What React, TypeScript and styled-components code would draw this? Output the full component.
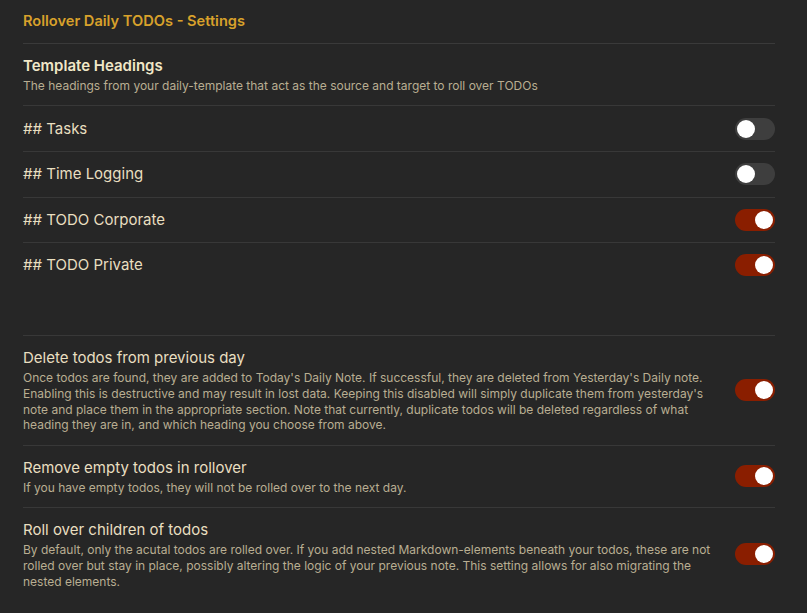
import React from 'react';
import styled, { createGlobalStyle } from 'styled-components';

const GlobalStyle = createGlobalStyle`
  html, body {
    margin: 0;
    padding: 0;
    background: #262626;
  }
  body {
    font-family: Inter, "Noto Sans", sans-serif;
    -webkit-font-smoothing: antialiased;
  }
`;

const Page = styled.div`
  min-height: 613px;
  background: #262626;
  padding: 0 32px 0 23px;
  box-sizing: border-box;
`;

const Title = styled.h3`
  margin: 0;
  padding: 12px 0 12px;
  font-size: 14.6px;
  font-weight: 600;
  line-height: 19px;
  color: #d8a12b;
  border-bottom: 1px solid #3a3a3a;
`;

const Item = styled.div<{ $spaceAfter?: number }>`
  display: flex;
  align-items: center;
  gap: 20px;
  padding: 11.3px 0;
  border-top: 1px solid #383838;
  margin-bottom: ${(p) => p.$spaceAfter ?? 0}px;

  &:first-of-type {
    border-top: none;
  }
`;

const Info = styled.div`
  flex: 1;
  min-width: 0;
`;

const Name = styled.div<{ $heading?: boolean }>`
  font-size: 15px;
  line-height: 22px;
  font-weight: ${(p) => (p.$heading ? 600 : 400)};
  color: ${(p) => (p.$heading ? '#f1e8c8' : '#e9dfc0')};
`;

const Desc = styled.div`
  font-size: 12px;
  line-height: 15.8px;
  color: #b9ae92;
  margin-top: 1px;
`;

const Track = styled.button<{ $on: boolean }>`
  position: relative;
  flex: none;
  width: 40px;
  height: 22px;
  border: none;
  padding: 0;
  border-radius: 11px;
  background: ${(p) => (p.$on ? '#8a1e00' : '#3e3e3e')};
  cursor: pointer;

  &::after {
    content: '';
    position: absolute;
    top: 2px;
    left: ${(p) => (p.$on ? '20px' : '2px')};
    width: 18px;
    height: 18px;
    border-radius: 50%;
    background: #ffffff;
  }
`;

const Toggle = ({ initial }: { initial: boolean }) => {
  const [on, setOn] = React.useState(initial);
  return <Track $on={on} onClick={() => setOn(!on)} aria-pressed={on} />;
};

const headings = [
  { name: '## Tasks', on: false },
  { name: '## Time Logging', on: false },
  { name: '## TODO Corporate', on: true },
  { name: '## TODO Private', on: true },
];

const options = [
  {
    name: 'Delete todos from previous day',
    desc: "Once todos are found, they are added to Today's Daily Note. If successful, they are deleted from Yesterday's Daily note. Enabling this is destructive and may result in lost data. Keeping this disabled will simply duplicate them from yesterday's note and place them in the appropriate section. Note that currently, duplicate todos will be deleted regardless of what heading they are in, and which heading you choose from above.",
  },
  {
    name: 'Remove empty todos in rollover',
    desc: 'If you have empty todos, they will not be rolled over to the next day.',
  },
  {
    name: 'Roll over children of todos',
    desc: 'By default, only the acutal todos are rolled over. If you add nested Markdown-elements beneath your todos, these are not rolled over but stay in place, possibly altering the logic of your previous note. This setting allows for also migrating the nested elements.',
  },
];

export default function App() {
  return (
    <Page>
      <GlobalStyle />
      <Title>Rollover Daily TODOs - Settings</Title>
      <div>
        <Item>
          <Info>
            <Name $heading>Template Headings</Name>
            <Desc>The headings from your daily-template that act as the source and target to roll over TODOs</Desc>
          </Info>
        </Item>
        {headings.map((h, i) => (
          <Item key={h.name} $spaceAfter={i === headings.length - 1 ? 47 : 0}>
            <Info>
              <Name>{h.name}</Name>
            </Info>
            <Toggle initial={h.on} />
          </Item>
        ))}
        {options.map((o) => (
          <Item key={o.name}>
            <Info>
              <Name>{o.name}</Name>
              <Desc>{o.desc}</Desc>
            </Info>
            <Toggle initial />
          </Item>
        ))}
      </div>
    </Page>
  );
}
